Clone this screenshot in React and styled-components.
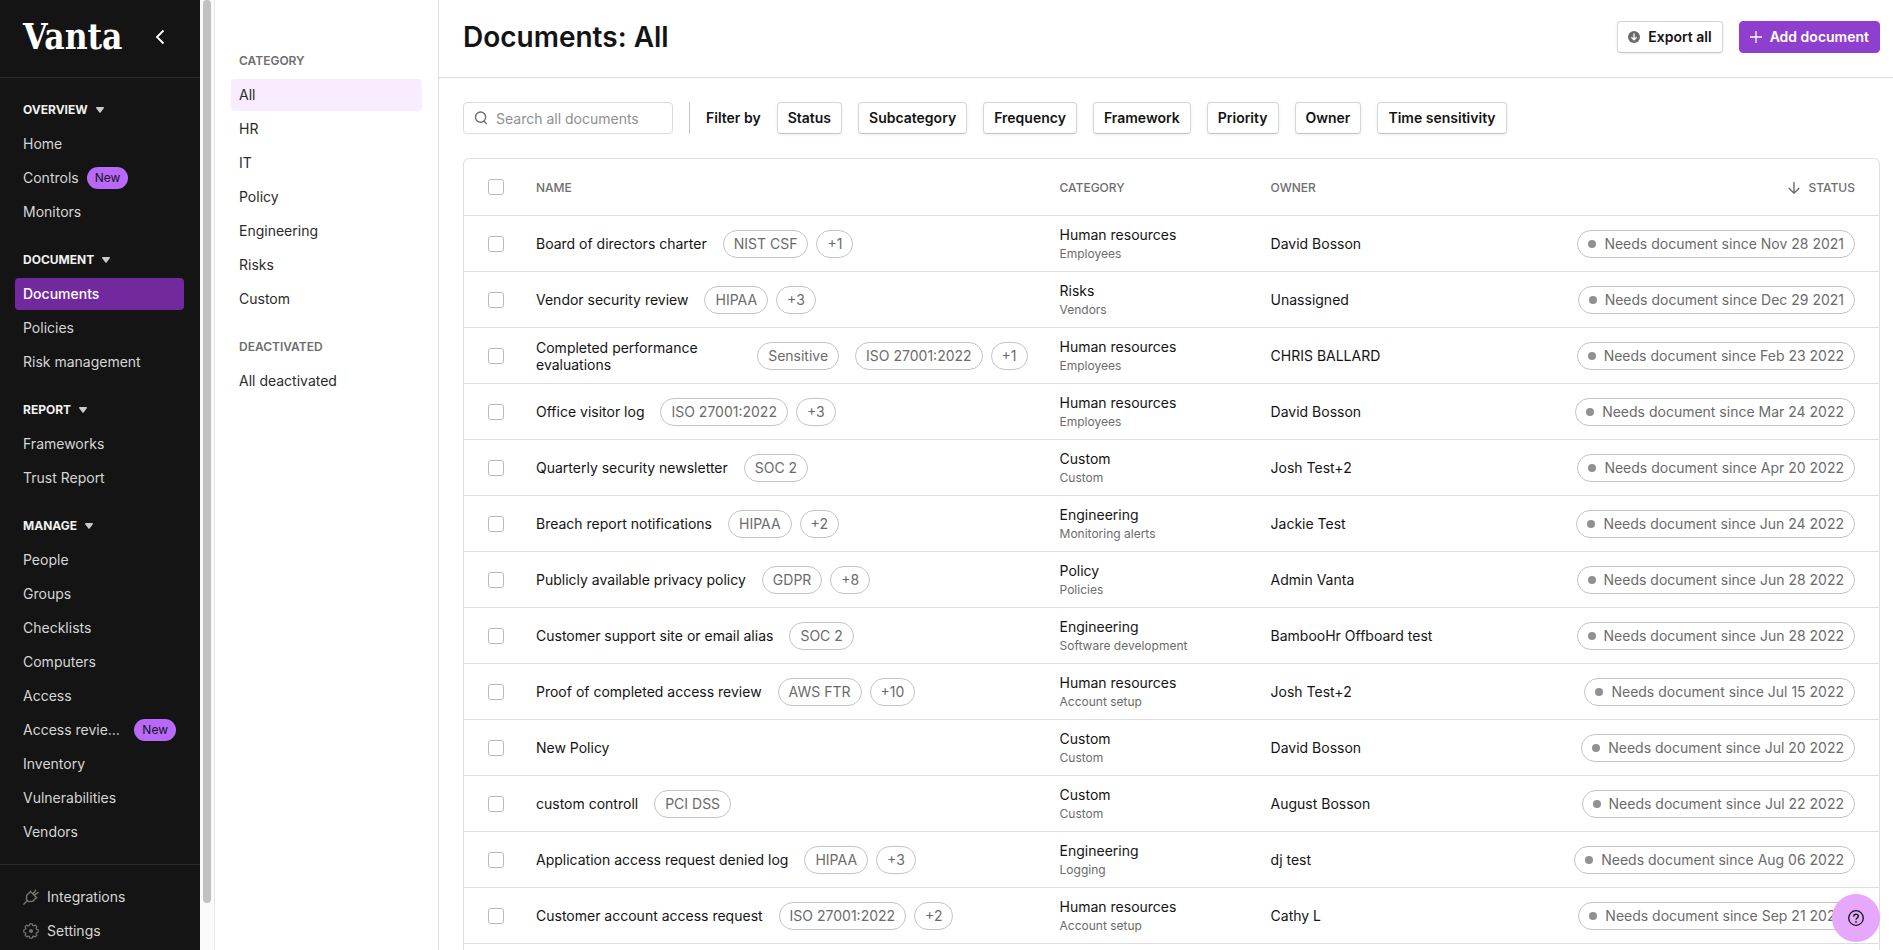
import { useState } from "react";
import styled, { createGlobalStyle, css } from "styled-components";

const GlobalStyle = createGlobalStyle`
  *,
  *::before,
  *::after {
    box-sizing: border-box;
  }

  body {
    margin: 0;
    overflow: hidden;
    background: #fff;
    color: #141414;
    font-family: Inter, "Liberation Sans", sans-serif;
    font-size: 14px;
    line-height: 20px;
  }

  button,
  input {
    font: inherit;
    color: inherit;
  }
`;

const Layout = styled.div`
  display: flex;
  height: 100vh;
`;

/* ---------- Sidebar ---------- */

const Sidebar = styled.nav`
  flex: 0 0 200px;
  overflow: hidden;
  background: #141414;
  color: #d6d6d6;
`;

const SidebarHeader = styled.div`
  display: flex;
  align-items: center;
  justify-content: space-between;
  height: 78px;
  padding: 0 28px 4px 23px;
  border-bottom: 1px solid #2b2b2b;
`;

const Logo = styled.a`
  color: #fff;
  font-family: "DejaVu Serif Condensed", "DejaVu Serif", serif;
  font-size: 35px;
  font-weight: 700;
  line-height: 40px;
  text-decoration: none;
`;

const CollapseButton = styled.button`
  display: flex;
  padding: 4px;
  border: 0;
  background: none;
  color: #fff;
`;

const SidebarBlock = styled.div`
  display: flex;
  flex-direction: column;
  gap: 16px;
  padding: 16px;
  padding-left: 15px;

  & + & {
    border-top: 1px solid #2b2b2b;
  }
`;

const NavGroup = styled.div`
  display: flex;
  flex-direction: column;
  gap: 2px;
`;

const GroupToggle = styled.button`
  display: flex;
  align-items: center;
  gap: 8px;
  height: 32px;
  padding: 0 8px;
  border: 0;
  background: none;
  color: #f0f0f0;
  font-size: 12px;
  font-weight: 700;
  text-transform: uppercase;
`;

const NavLink = styled.a`
  display: flex;
  align-items: center;
  gap: 8px;
  height: 32px;
  padding: 0 8px;
  border-radius: 4px;
  color: inherit;
  text-decoration: none;
  white-space: nowrap;

  ${(props) =>
    props.$active &&
    css`
      background: #73299e;
      color: #fff;
      font-weight: 500;
    `}

  svg {
    flex: none;
    color: #757575;
  }
`;

const NavLabel = styled.span`
  overflow: hidden;
  text-overflow: ellipsis;
`;

const NewBadge = styled.span`
  flex: none;
  padding: 1px 8px;
  border-radius: 12px;
  background: #b969f9;
  color: #141414;
  font-size: 12px;
`;

const ScrollTrack = styled.div`
  display: flex;
  justify-content: center;
  flex: 0 0 15px;
  border-right: 1px solid #e8e8e8;
  background: #fafafa;
`;

const ScrollThumb = styled.div`
  width: 8px;
  height: 95%;
  border-radius: 4px;
  background: #c1c1c1;
`;

/* ---------- Categories ---------- */

const CategoryPanel = styled.aside`
  display: flex;
  flex: 0 0 224px;
  flex-direction: column;
  gap: 16px;
  padding: 45px 16px 16px;
  border-right: 1px solid #e0e0e0;
`;

const CategoryTitle = styled.h2`
  height: 32px;
  margin: 0;
  padding: 0 8px;
  color: #6e6e6e;
  font-size: 12px;
  font-weight: 600;
  line-height: 32px;
  text-transform: uppercase;
`;

const CategoryLink = styled.a`
  height: 32px;
  padding: 0 8px;
  border-radius: 4px;
  background: ${(props) => (props.$active ? "#f8ecfe" : "none")};
  color: #2b2b2b;
  line-height: 32px;
  text-decoration: none;
`;

/* ---------- Main ---------- */

const Main = styled.main`
  display: flex;
  flex: 1;
  flex-direction: column;
  min-width: 0;
`;

const PageHeader = styled.header`
  display: flex;
  flex: none;
  align-items: center;
  justify-content: space-between;
  height: 78px;
  padding: 0 13px 4px 24px;
  border-bottom: 1px solid #dbdbdb;
`;

const Title = styled.h1`
  margin: 0;
  font-size: 28px;
  font-weight: 600;
  line-height: 36px;
`;

const Actions = styled.div`
  display: flex;
  gap: 16px;
`;

const Button = styled.button`
  display: flex;
  align-items: center;
  gap: 8px;
  height: 32px;
  padding: 0 10px;
  border: 1px solid #d6d6d6;
  border-bottom-color: #c4c4c4;
  border-radius: 4px;
  background: #fff;
  box-shadow: 0 1px 3px rgba(0, 0, 0, 0.08);
  font-weight: 600;
  white-space: nowrap;

  ${(props) =>
    props.$primary &&
    css`
      border-color: #8e3fd0;
      background: #8e3fd0;
      box-shadow: none;
      color: #fff;
    `}
`;

const Filters = styled.div`
  display: flex;
  flex: none;
  align-items: center;
  gap: 16px;
  padding: 24px 13px 24px 24px;
`;

const SearchBox = styled.label`
  display: flex;
  align-items: center;
  gap: 8px;
  width: 210px;
  height: 32px;
  padding: 0 10px;
  border: 1px solid #dbdbdb;
  border-radius: 4px;
  color: #6e6e6e;

  svg {
    flex: none;
  }

  input {
    width: 100%;
    min-width: 0;
    padding: 2px 0 0;
    border: 0;
    outline: 0;
    background: none;
  }

  input::placeholder {
    color: #8f8f8f;
    opacity: 1;
  }
`;

const Divider = styled.div`
  width: 1px;
  height: 32px;
  background: #c4c4c4;
`;

const FilterLabel = styled.span`
  font-weight: 600;
`;

const TableCard = styled.div`
  flex: 1;
  margin: 0 13px 0 24px;
  border: 1px solid #dedede;
  border-bottom: 0;
  border-radius: 6px 6px 0 0;
  overflow: hidden;
`;

const Table = styled.table`
  width: 100%;
  border-collapse: separate;
  border-spacing: 0;
  table-layout: fixed;
`;

const HeadCell = styled.th`
  width: ${(props) => props.$width || "auto"};
  height: 57px;
  padding: 1px 32px 0 0;
  border-bottom: 1px solid #dedede;
  color: #6e6e6e;
  font-size: 12px;
  font-weight: 500;
  text-align: left;
  text-transform: uppercase;

  &:first-child {
    padding: 0 24px;
  }

  &:last-child {
    padding-right: 24px;
  }
`;

const Cell = styled.td`
  height: 56px;
  padding: 0 32px 0 0;
  border-bottom: 1px solid #dedede;

  &:first-child {
    padding: 0 24px;
  }

  &:last-child {
    padding-right: 24px;
    text-align: right;
  }
`;

const Checkbox = styled.input.attrs({ type: "checkbox" })`
  display: block;
  width: 16px;
  height: 16px;
  margin: 0;
  border: 1px solid #bdbdbd;
  border-radius: 3px;
  background: #fff;
  appearance: none;

  &:checked {
    border-color: #8e3fd0;
    background: #8e3fd0;
  }
`;

const SortButton = styled.button`
  display: flex;
  align-items: center;
  gap: 9px;
  margin-left: auto;
  padding: 0;
  border: 0;
  background: none;
  text-transform: inherit;
`;

const NameWrap = styled.div`
  display: flex;
  align-items: center;
  gap: 16px;
`;

const Name = styled.span`
  line-height: 17px;
`;

const TagPair = styled.div`
  display: flex;
  flex: none;
  gap: 8px;
`;

const Tag = styled.span`
  display: inline-flex;
  flex: none;
  align-items: center;
  gap: 8px;
  height: 28px;
  padding: 0 10px;
  border: 1px solid #c4c4c4;
  border-radius: 14px;
  background: #fff;
  color: #6b6b6b;
  vertical-align: middle;
  white-space: nowrap;
`;

const Dot = styled.span`
  width: 8px;
  height: 8px;
  border-radius: 50%;
  background: #919095;
`;

const Subcategory = styled.div`
  color: #6b6b6b;
  font-size: 12px;
  line-height: 18px;
`;

const HelpButton = styled.button`
  position: fixed;
  right: 13px;
  bottom: 8px;
  display: flex;
  align-items: center;
  justify-content: center;
  width: 48px;
  height: 48px;
  padding: 0;
  border: 0;
  border-radius: 50%;
  background: #e5a8fb;
`;

/* ---------- Icons ---------- */

const Icon = ({ size = 16, children }) => (
  <svg
    width={size}
    height={size}
    viewBox="0 0 16 16"
    fill="none"
    stroke="currentColor"
    strokeWidth="1.4"
    aria-hidden="true"
  >
    {children}
  </svg>
);

const CaretIcon = () => (
  <svg width="8" height="6" viewBox="0 0 8 6" fill="#c9c9c9" aria-hidden="true">
    <path d="M.8 0h6.4c.7 0 1 .7.6 1.2L4.6 5.6a.8.8 0 0 1-1.2 0L.2 1.2C-.2.7.1 0 .8 0z" />
  </svg>
);

const ChevronIcon = () => (
  <Icon>
    <path d="M11.500 1.500 5 8l6.500 6.500" strokeWidth="1.8" />
  </Icon>
);

const PlugIcon = () => (
  <Icon>
    <path
      d="M.4 15.600 4.400 11.600M6.800 1.800l7.400 7.400M7.600 2.600 3.700 6.200l-.3 4.300 2.100 2.100 4.300-.3 3.600-3.900M10 5l3-4.300M11.200 6.200l4.400-3"
      strokeLinejoin="round"
    />
  </Icon>
);

// eight teeth, one every 45 degrees
const gearPoints = [0, 45, 90, 135, 180, 225, 270, 315]
  .flatMap((angle) => [
    [5.7, angle - 18],
    [7.3, angle - 10],
    [7.3, angle + 10],
    [5.7, angle + 18],
  ])
  .map(([radius, angle]) => {
    const rad = (angle * Math.PI) / 180;
    return `${8 + radius * Math.cos(rad)},${8 + radius * Math.sin(rad)}`;
  })
  .join(" ");

const GearIcon = () => (
  <Icon>
    <polygon points={gearPoints} strokeWidth="1.2" strokeLinejoin="round" />
    <circle cx="8" cy="8" r="2" fill="currentColor" stroke="none" />
  </Icon>
);

const SearchIcon = () => (
  <Icon size={14}>
    <circle cx="7.5" cy="7" r="5.8" strokeWidth="1.6" />
    <path d="m11 11 3.500 4" strokeWidth="1.600" />
  </Icon>
);

const ExportIcon = () => (
  <svg width="12" height="12" viewBox="0 0 12 12" aria-hidden="true">
    <circle cx="6" cy="6" r="6" fill="#6b6b6b" />
    <path d="M6 2.500v6.300M3.400 6.300 6 8.900l2.600-2.600" fill="none" stroke="#fff" strokeWidth="1.3" />
  </svg>
);

const PlusIcon = () => (
  <svg width="12" height="12" viewBox="0 0 12 12" aria-hidden="true">
    <path d="M6 0v12M0 6h12" stroke="#fff" strokeWidth="1.3" />
  </svg>
);

const SortIcon = () => (
  <svg width="12" height="12" viewBox="0 0 12 12" aria-hidden="true">
    <path d="M6 0v11M.7 6 6 11.200 11.300 6" fill="none" stroke="#6b6b6b" strokeWidth="1.4" />
  </svg>
);

const HelpIcon = () => (
  <Icon>
    <circle cx="8" cy="8" r="7.300" strokeWidth="1.3" />
    <path d="M5.700 6.500C5.700 5 6.700 4.200 8 4.200s2.300.8 2.300 2.100c0 1.700-2.300 1.800-2.300 3.500" />
    <circle cx="8" cy="11.800" r="0.900" fill="currentColor" stroke="none" />
  </Icon>
);

/* ---------- Data ---------- */

const navGroups = [
  { title: "Overview", items: ["Home", "Controls", "Monitors"] },
  { title: "Document", items: ["Documents", "Policies", "Risk management"] },
  { title: "Report", items: ["Frameworks", "Trust Report"] },
  {
    title: "Manage",
    items: [
      "People",
      "Groups",
      "Checklists",
      "Computers",
      "Access",
      "Access reviews",
      "Inventory",
      "Vulnerabilities",
      "Vendors",
    ],
  },
];

const newItems = ["Controls", "Access reviews"];

const categories = ["All", "HR", "IT", "Policy", "Engineering", "Risks", "Custom"];

const filters = [
  "Status",
  "Subcategory",
  "Frequency",
  "Framework",
  "Priority",
  "Owner",
  "Time sensitivity",
];

const documents = [
  { name: "Board of directors charter", tag: "NIST CSF", more: 1, category: "Human resources", sub: "Employees", owner: "David Bosson", since: "Nov 28 2021" },
  { name: "Vendor security review", tag: "HIPAA", more: 3, category: "Risks", sub: "Vendors", owner: "Unassigned", since: "Dec 29 2021" },
  { name: "Completed performance evaluations", sensitive: true, tag: "ISO 27001:2022", more: 1, category: "Human resources", sub: "Employees", owner: "CHRIS BALLARD", since: "Feb 23 2022" },
  { name: "Office visitor log", tag: "ISO 27001:2022", more: 3, category: "Human resources", sub: "Employees", owner: "David Bosson", since: "Mar 24 2022" },
  { name: "Quarterly security newsletter", tag: "SOC 2", category: "Custom", sub: "Custom", owner: "Josh Test+2", since: "Apr 20 2022" },
  { name: "Breach report notifications", tag: "HIPAA", more: 2, category: "Engineering", sub: "Monitoring alerts", owner: "Jackie Test", since: "Jun 24 2022" },
  { name: "Publicly available privacy policy", tag: "GDPR", more: 8, category: "Policy", sub: "Policies", owner: "Admin Vanta", since: "Jun 28 2022" },
  { name: "Customer support site or email alias", tag: "SOC 2", category: "Engineering", sub: "Software development", owner: "BambooHr Offboard test", since: "Jun 28 2022" },
  { name: "Proof of completed access review", tag: "AWS FTR", more: 10, category: "Human resources", sub: "Account setup", owner: "Josh Test+2", since: "Jul 15 2022" },
  { name: "New Policy", category: "Custom", sub: "Custom", owner: "David Bosson", since: "Jul 20 2022" },
  { name: "custom controll", tag: "PCI DSS", category: "Custom", sub: "Custom", owner: "August Bosson", since: "Jul 22 2022" },
  { name: "Application access request denied log", tag: "HIPAA", more: 3, category: "Engineering", sub: "Logging", owner: "dj test", since: "Aug 06 2022" },
  { name: "Customer account access request", tag: "ISO 27001:2022", more: 2, category: "Human resources", sub: "Account setup", owner: "Cathy L", since: "Sep 21 2022" },
];

/* ---------- Components ---------- */

function SidebarGroup({ title, items }) {
  const [open, setOpen] = useState(true);

  return (
    <NavGroup>
      <GroupToggle aria-expanded={open} onClick={() => setOpen(!open)}>
        {title}
        <CaretIcon />
      </GroupToggle>
      {open &&
        items.map((item) => (
          <NavLink key={item} href="#" $active={item === "Documents"}>
            <NavLabel>{item}</NavLabel>
            {newItems.includes(item) && <NewBadge>New</NewBadge>}
          </NavLink>
        ))}
    </NavGroup>
  );
}

function DocumentRow({ document }) {
  const { name, sensitive, tag, more, category, sub, owner, since } = document;

  return (
    <tr>
      <Cell>
        <Checkbox aria-label={name} />
      </Cell>
      <Cell>
        <NameWrap>
          <Name>{name}</Name>
          {sensitive && <Tag>Sensitive</Tag>}
          {tag && (
            <TagPair>
              <Tag>{tag}</Tag>
              {more && <Tag>+{more}</Tag>}
            </TagPair>
          )}
        </NameWrap>
      </Cell>
      <Cell>
        {category}
        <Subcategory>{sub}</Subcategory>
      </Cell>
      <Cell>{owner}</Cell>
      <Cell>
        <Tag>
          <Dot />
          Needs document since {since}
        </Tag>
      </Cell>
    </tr>
  );
}

function App() {
  const [search, setSearch] = useState("");

  const rows = documents.filter((doc) =>
    doc.name.toLowerCase().includes(search.toLowerCase())
  );

  return (
    <>
      <GlobalStyle />
      <Layout>
        <Sidebar>
          <SidebarHeader>
            <Logo href="#">Vanta</Logo>
            <CollapseButton aria-label="Collapse sidebar">
              <ChevronIcon />
            </CollapseButton>
          </SidebarHeader>
          <SidebarBlock>
            {navGroups.map((group) => (
              <SidebarGroup key={group.title} {...group} />
            ))}
          </SidebarBlock>
          <SidebarBlock>
            <NavGroup>
              <NavLink href="#">
                <PlugIcon />
                Integrations
              </NavLink>
              <NavLink href="#">
                <GearIcon />
                Settings
              </NavLink>
            </NavGroup>
          </SidebarBlock>
        </Sidebar>
        <ScrollTrack>
          <ScrollThumb />
        </ScrollTrack>

        <CategoryPanel>
          <NavGroup>
            <CategoryTitle>Category</CategoryTitle>
            {categories.map((category) => (
              <CategoryLink key={category} href="#" $active={category === "All"}>
                {category}
              </CategoryLink>
            ))}
          </NavGroup>
          <NavGroup>
            <CategoryTitle>Deactivated</CategoryTitle>
            <CategoryLink href="#">All deactivated</CategoryLink>
          </NavGroup>
        </CategoryPanel>

        <Main>
          <PageHeader>
            <Title>Documents: All</Title>
            <Actions>
              <Button>
                <ExportIcon />
                Export all
              </Button>
              <Button $primary>
                <PlusIcon />
                Add document
              </Button>
            </Actions>
          </PageHeader>

          <Filters>
            <SearchBox>
              <SearchIcon />
              <input
                type="text"
                aria-label="Search all documents"
                placeholder="Search all documents"
                value={search}
                onChange={(e) => setSearch(e.target.value)}
              />
            </SearchBox>
            <Divider />
            <FilterLabel>Filter by</FilterLabel>
            {filters.map((filter) => (
              <Button key={filter}>{filter}</Button>
            ))}
          </Filters>

          <TableCard>
            <Table>
              <thead>
                <tr>
                  <HeadCell $width="72px">
                    <Checkbox aria-label="Select all documents" />
                  </HeadCell>
                  <HeadCell $width="37%">Name</HeadCell>
                  <HeadCell>Category</HeadCell>
                  <HeadCell $width="17%">Owner</HeadCell>
                  <HeadCell $width="26%">
                    <SortButton>
                      <SortIcon />
                      Status
                    </SortButton>
                  </HeadCell>
                </tr>
              </thead>
              <tbody>
                {rows.map((doc) => (
                  <DocumentRow key={doc.name} document={doc} />
                ))}
              </tbody>
            </Table>
          </TableCard>
        </Main>
      </Layout>
      <HelpButton aria-label="Help">
        <HelpIcon />
      </HelpButton>
    </>
  );
}

export default App;
